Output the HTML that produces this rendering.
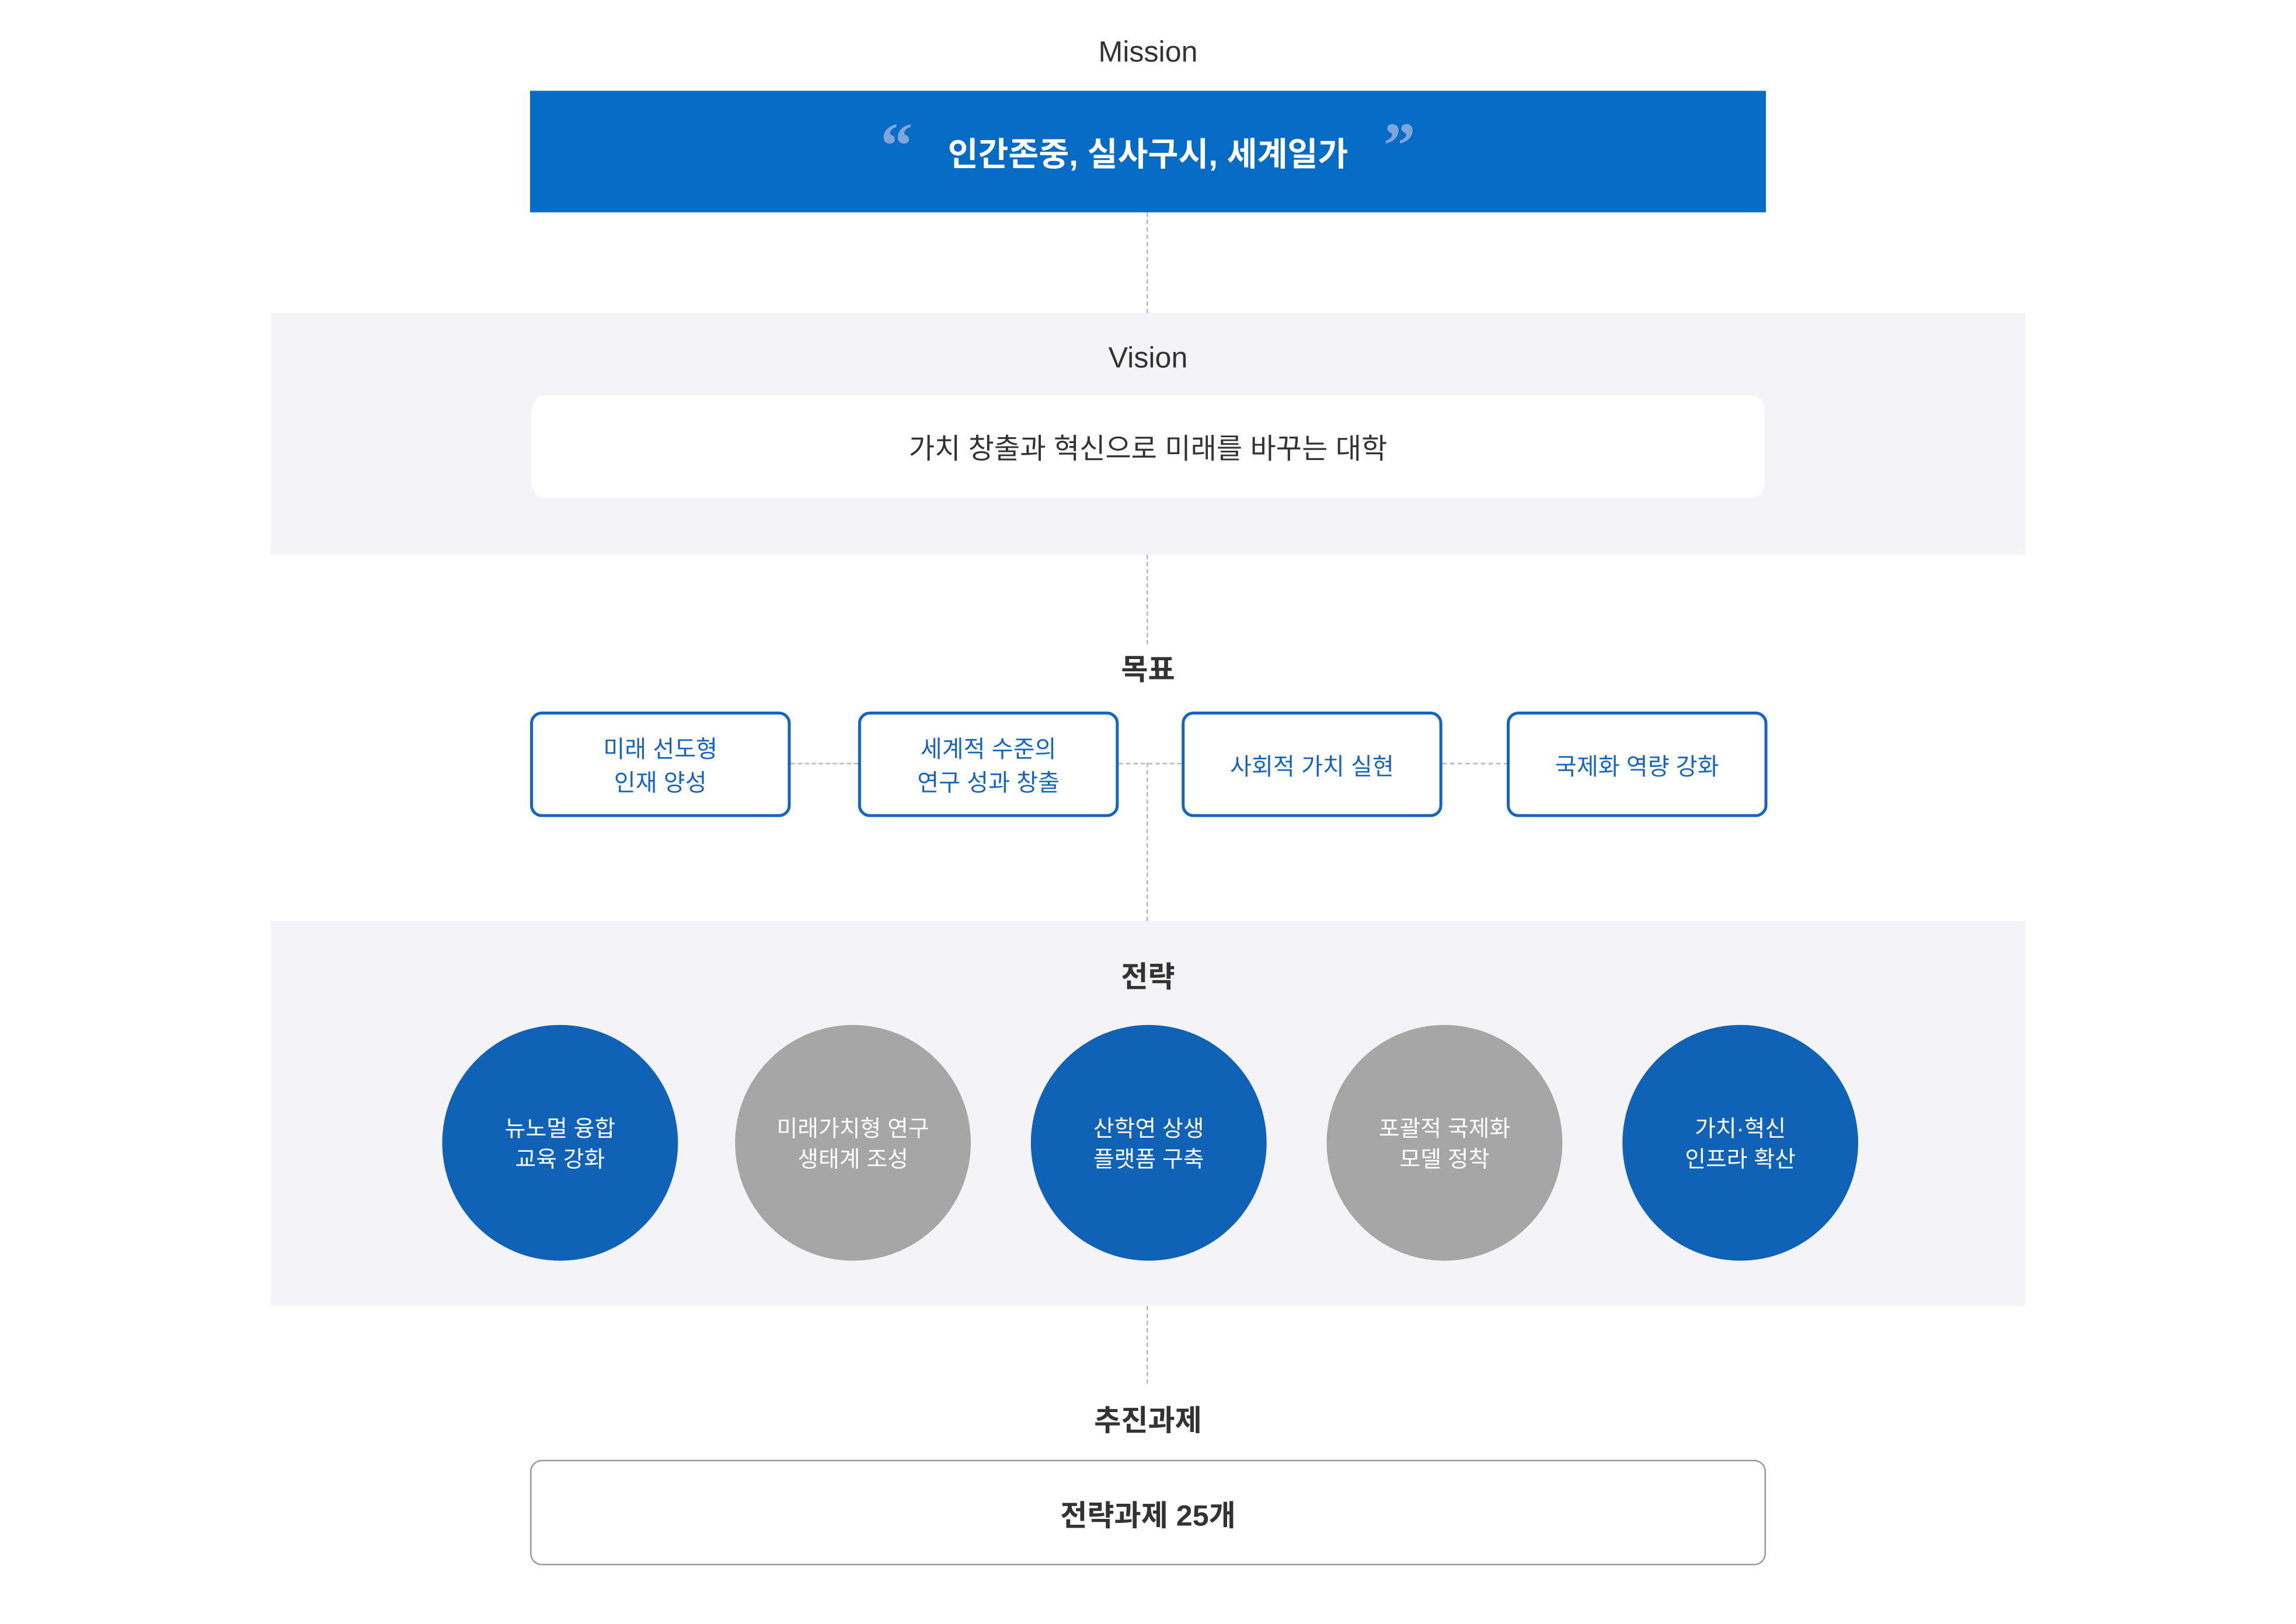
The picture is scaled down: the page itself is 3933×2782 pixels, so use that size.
<!DOCTYPE html>
<html><head><meta charset="utf-8"><style>
html,body{margin:0;padding:0;background:#fff;}
body{width:3933px;height:2781px;overflow:hidden;position:relative;}
#w{position:absolute;left:0;top:0;width:1568px;height:1109px;transform:scale(2.5083);transform-origin:0 0;font-family:"Liberation Sans","Noto Sans CJK KR",sans-serif;}
.a{position:absolute;}
.t{position:absolute;left:0;width:1568px;text-align:center;color:#333;}
.vd{position:absolute;left:783px;width:0;border-left:1px dashed #b8b8b8;}
.hd{position:absolute;height:0;border-top:1px dashed #b8b8b8;top:521px;}
.g{position:absolute;display:flex;align-items:center;justify-content:center;text-align:center;box-sizing:border-box;}
.goal{top:486px;width:178px;height:72px;border:2px solid #1565c0;border-radius:8px;color:#1565c0;font-size:16px;line-height:23px;background:#fff;padding-top:4px;}
.c{top:700px;width:161px;height:161px;border-radius:50%;color:#fff;font-size:15.5px;line-height:21px;padding-top:2px;}
.b{background:#0f62b5;}.gr{background:#a6a6a6;}
</style></head><body><div id="w">
<div class="t" style="top:25px;font-size:20px;">Mission</div>
<div class="g" style="left:362px;top:62px;width:844px;height:83px;background:#066bc5;color:#fff;font-size:22.5px;font-weight:bold;">
<span style="color:#7ea6da;font-family:'Liberation Serif',serif;font-size:44px;position:relative;top:-4px;margin-right:24px;">“</span>인간존중, 실사구시, 세계일가<span style="color:#7ea6da;font-family:'Liberation Serif',serif;font-size:44px;position:relative;top:-4px;margin-left:24px;">”</span></div>
<div class="vd" style="top:145px;height:69px;"></div>
<div class="a" style="left:185px;top:214px;width:1198px;height:165px;background:#f4f4f6;"></div>
<div class="t" style="top:234px;font-size:20px;">Vision</div>
<div class="g" style="left:363px;top:270px;width:842px;height:70px;background:#fff;border-radius:10px;font-size:19.2px;color:#333;">가치 창출과 혁신으로 미래를 바꾸는 대학</div>
<div class="vd" style="top:379px;height:61px;"></div>
<div class="t" style="top:441px;font-size:20px;font-weight:bold;">목표</div>
<div class="hd" style="left:540px;width:46px;"></div>
<div class="hd" style="left:764px;width:43px;"></div>
<div class="hd" style="left:985px;width:45px;"></div>
<div class="vd" style="top:521px;height:108px;"></div>
<div class="g goal" style="left:362px;">미래 선도형<br>인재 양성</div>
<div class="g goal" style="left:586px;">세계적 수준의<br>연구 성과 창출</div>
<div class="g goal" style="left:807px;">사회적 가치 실현</div>
<div class="g goal" style="left:1029px;">국제화 역량 강화</div>
<div class="a" style="left:185px;top:629px;width:1198px;height:263px;background:#f4f4f6;"></div>
<div class="t" style="top:651px;font-size:20px;font-weight:bold;">전략</div>
<div class="g c b" style="left:302px;">뉴노멀 융합<br>교육 강화</div>
<div class="g c gr" style="left:502px;">미래가치형 연구<br>생태계 조성</div>
<div class="g c b" style="left:704px;">산학연 상생<br>플랫폼 구축</div>
<div class="g c gr" style="left:906px;">포괄적 국제화<br>모델 정착</div>
<div class="g c b" style="left:1108px;">가치·혁신<br>인프라 확산</div>
<div class="vd" style="top:892px;height:53px;"></div>
<div class="t" style="top:954px;font-size:20px;font-weight:bold;">추진과제</div>
<div class="g" style="left:362px;top:997px;width:844px;height:72px;border:1px solid #999;border-radius:8px;font-size:20px;font-weight:bold;color:#333;">전략과제 25개</div>
</div></body></html>
